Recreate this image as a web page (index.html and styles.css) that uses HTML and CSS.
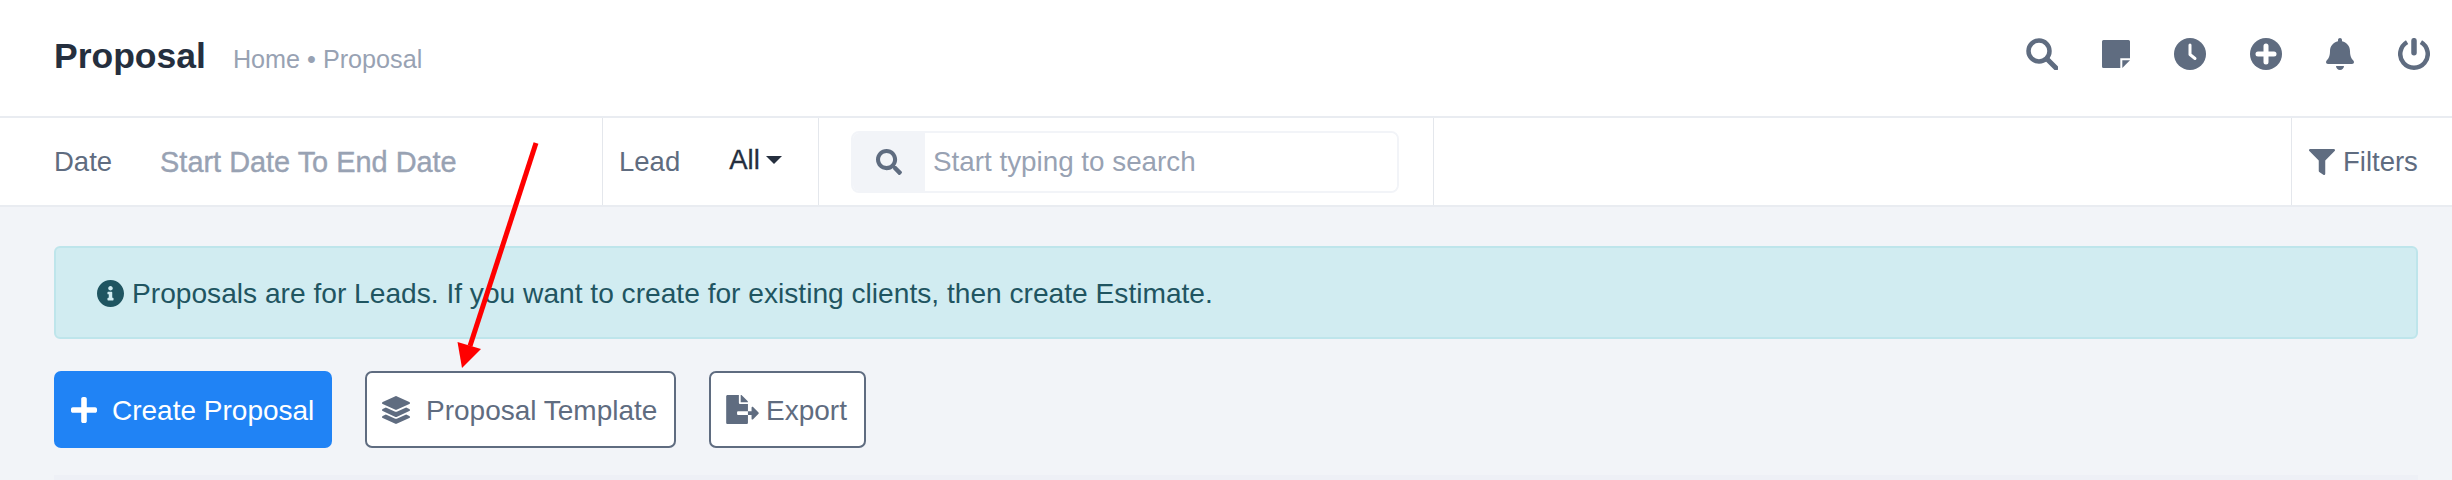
FILE: index.html
```html
<!DOCTYPE html>
<html lang="en">
<head>
  <meta charset="UTF-8" />
  <title>Proposal</title>
  <link rel="stylesheet" href="styles.css">
</head>
<body>
  <div class="header">
    <div class="title-wrap">
      <h1>Proposal</h1>
      <span class="crumbs">Home &bull; Proposal</span>
    </div>
    <div class="header-icons">
      <svg class="icon" viewBox="0 0 32 32"><circle cx="13" cy="13" r="10.500" fill="none" stroke="currentColor" stroke-width="4.500"/><path d="M21 21l9 9" stroke="currentColor" stroke-width="5" stroke-linecap="round"/></svg>
      <svg class="icon note" viewBox="0 0 28 28"><path d="M1.500 0h25A1.500 1.500 0 0 1 28 1.500V18.300H18.300V28H1.500A1.500 1.500 0 0 1 0 26.500v-25A1.500 1.500 0 0 1 1.500 0z"/><path d="M20.300 20.300H28L20.300 28z"/></svg>
      <svg class="icon" viewBox="0 0 32 32"><circle cx="16" cy="16" r="16"/><path d="M16 7v9.500l5 4" fill="none" stroke="#fff" stroke-width="3" stroke-linecap="round" stroke-linejoin="round"/></svg>
      <svg class="icon" viewBox="0 0 32 32"><circle cx="16" cy="16" r="16"/><path d="M16 8v16M8 16h16" stroke="#fff" stroke-width="5" stroke-linecap="round"/></svg>
      <svg class="icon bell" viewBox="0 0 448 512"><path d="M224 512c35.32 0 63.97-28.65 63.97-64H160.03c0 35.35 28.65 64 63.97 64zm215.39-149.71c-19.32-20.76-55.47-51.99-55.47-154.29 0-77.7-54.48-139.9-127.94-155.16V32c0-17.67-14.32-32-31.98-32s-31.98 14.33-31.98 32v20.84C118.56 68.1 64.08 130.3 64.08 208c0 102.3-36.15 133.53-55.47 154.29-6 6.45-8.66 14.16-8.61 21.71.11 16.4 12.98 32 32.1 32h383.8c19.12 0 32-15.6 32.1-32 .05-7.55-2.61-15.27-8.61-21.71z"/></svg>
      <svg class="icon" viewBox="0 0 32 32"><path d="M9.100 4.100a13.750 13.750 0 1 0 13.800 0" fill="none" stroke="currentColor" stroke-width="4.500"/><path d="M16 2.700v12" stroke="currentColor" stroke-width="5.500" stroke-linecap="round"/></svg>
    </div>
  </div>

  <div class="toolbar">
    <div class="tool tool-date">
      <span class="tool-label">Date</span>
      <span class="date-range">Start Date To End Date</span>
    </div>
    <div class="tool tool-lead">
      <span class="tool-label">Lead</span>
      <span class="lead-value">All</span>
      <span class="caret"></span>
    </div>
    <div class="tool tool-search">
      <div class="search-group">
        <span class="search-addon">
          <svg class="search-icon" viewBox="0 0 512 512"><path d="M505 442.7L405.3 343c-4.5-4.5-10.6-7-17-7H372c27.6-35.3 44-79.7 44-128C416 93.1 322.900 0 208 0S0 93.1 0 208s93.1 208 208 208c48.3 0 92.7-16.4 128-44v16.3c0 6.4 2.5 12.5 7 17l99.7 99.7c9.4 9.4 24.6 9.4 33.9 0l28.3-28.3c9.4-9.4 9.4-24.6.1-34zM208 336c-70.7 0-128-57.2-128-128 0-70.7 57.2-128 128-128 70.7 0 128 57.2 128 128 0 70.7-57.2 128-128 128z"/></svg>
        </span>
        <input class="search-input" type="text" placeholder="Start typing to search" />
      </div>
    </div>
    <div class="tool-spacer"></div>
    <div class="tool tool-filters">
      <svg class="filter-icon" viewBox="0 0 512 512"><path d="M487.976 0H24.028C2.71 0-8.047 25.866 7.058 40.971L192 225.941V432c0 7.831 3.821 15.17 10.237 19.662l80 55.98C298.02 518.69 320 507.493 320 487.98V225.941l184.947-184.97C520.021 25.896 509.338 0 487.976 0z"/></svg>
      <span>Filters</span>
    </div>
  </div>

  <div class="content">
    <div class="alert">
      <svg class="alert-icon" viewBox="8 8 496 496"><path d="M256 8C119.043 8 8 119.083 8 256c0 136.997 111.043 248 248 248s248-111.003 248-248C504 119.083 392.957 8 256 8zm0 110c23.196 0 42 18.804 42 42s-18.804 42-42 42-42-18.804-42-42 18.804-42 42-42zm56 254c0 6.627-5.373 12-12 12h-88c-6.627 0-12-5.373-12-12v-24c0-6.627 5.373-12 12-12h12v-64h-12c-6.627 0-12-5.373-12-12v-24c0-6.627 5.373-12 12-12h64c6.627 0 12 5.373 12 12v100h12c6.627 0 12 5.373 12 12v24z"/></svg>
      <span>Proposals are for Leads. If you want to create for existing clients, then create Estimate.</span>
    </div>

    <div class="actions">
      <a class="btn btn-primary">
        <svg class="btn-icon" viewBox="0 0 448 512"><path d="M416 208H272V64c0-17.67-14.33-32-32-32h-32c-17.67 0-32 14.33-32 32v144H32c-17.67 0-32 14.33-32 32v32c0 17.67 14.33 32 32 32h144v144c0 17.67 14.33 32 32 32h32c17.67 0 32-14.33 32-32V304h144c17.67 0 32-14.33 32-32v-32c0-17.67-14.33-32-32-32z"/></svg>
        Create Proposal
      </a>
      <a class="btn btn-outline btn-template">
        <svg class="btn-icon" viewBox="0 0 512 512"><path d="M12.41 148.02l232.94 105.67c6.8 3.09 14.49 3.09 21.29 0l232.94-105.67c16.55-7.51 16.55-32.52 0-40.03L266.65 2.31a25.607 25.607 0 0 0-21.29 0L12.41 107.98c-16.55 7.51-16.55 32.53 0 40.04zm487.18 88.28l-58.09-26.33-161.64 73.27c-7.56 3.43-15.59 5.17-23.86 5.17s-16.29-1.74-23.86-5.17L70.51 209.97l-58.1 26.33c-16.55 7.5-16.55 32.5 0 40l232.94 105.59c6.8 3.08 14.49 3.08 21.29 0L499.59 276.3c16.55-7.5 16.55-32.5 0-40zm0 127.8l-57.87-26.23-161.86 73.37c-7.56 3.43-15.59 5.17-23.86 5.17s-16.29-1.74-23.86-5.17L70.29 337.87 12.41 364.1c-16.55 7.5-16.55 32.5 0 40l232.94 105.59c6.8 3.08 14.49 3.08 21.29 0L499.59 404.1c16.55-7.5 16.55-32.5 0-40z"/></svg>
        Proposal Template
      </a>
      <a class="btn btn-outline btn-export">
        <svg class="btn-icon export-icon" viewBox="0 0 576 512"><path d="M384 121.9c0-6.3-2.5-12.4-7-16.9L279.1 7c-4.5-4.5-10.6-7-17-7H256v128h128zM571 308l-95.7-96.4c-10.1-10.1-27.4-3-27.4 11.3V288h-64v64h64v65.2c0 14.3 17.3 21.4 27.4 11.3L571 332c6.6-6.6 6.600-17.4 0-24zm-379 28v-32c0-8.8 7.2-16 16-16h176V160H248c-13.2 0-24-10.8-24-24V0H24C10.7 0 0 10.7 0 24v464c0 13.3 10.7 24 24 24h336c13.3 0 24-10.7 24-24V352H208c-8.8 0-16-7.2-16-16z"/></svg>
        Export
      </a>
    </div>

    <div class="card"></div>
  </div>

  <!-- annotation drawn over the page -->
  <svg class="annotation" viewBox="0 0 2452 480">
    <path d="M536 143L470 346" fill="none" stroke="#ff0000" stroke-width="5"/>
    <path d="M457.500 342L481 349L462 368z" fill="#ff0000"/>
  </svg>
</body>
</html>
```

FILE: styles.css
```css
html, body {
  margin: 0;
  padding: 0;
  height: 480px;
  overflow: hidden;
}
body {
  font-family: "Liberation Sans", Arial, sans-serif;
  background-color: #f2f4f8;
  color: #5f6c80;
}
.header {
  background-color: white;
  height: 118px;
  box-sizing: border-box;
  padding: 0 22px 8px 54px;
  border-bottom: 2px solid #e9ecf1;
  display: flex;
  align-items: center;
  justify-content: space-between;
}
.title-wrap {
  margin-top: 4px;
  display: flex;
  align-items: baseline;
  gap: 27px;
}
.title-wrap h1 {
  margin: 0;
  font-size: 35.500px;
  color: #252f3e;
}
.crumbs {
  font-size: 25.200px;
  color: #98a2b3;
}
.header-icons {
  display: flex;
  align-items: center;
  gap: 44px;
}
.icon {
  width: 32px;
  height: 32px;
  fill: #5f6c80;
  color: #5f6c80;
  display: block;
}
.icon.note {
  width: 28px;
  height: 28px;
}
.icon.bell {
  width: 28px;
}
.toolbar {
  background-color: white;
  height: 89px;
  box-sizing: border-box;
  border-bottom: 2px solid #e9ecf1;
  display: flex;
  font-size: 27.500px;
}
.tool {
  padding-top: 1px;
  display: flex;
  align-items: center;
  border-right: 1px solid #e4e7ec;
  box-sizing: border-box;
}
.tool-date {
  width: 603px;
  padding-left: 54px;
}
.tool-label {
  color: #5f6c80;
}
.date-range {
  margin-left: 48px;
  color: #98a2b3;
  font-size: 28.900px;
  -webkit-text-stroke: 0.4px #98a2b3;
}
.tool-lead {
  width: 216px;
  padding-left: 16px;
}
.lead-value {
  margin-left: 49px;
  color: #252f3e;
  position: relative;
  top: -2px;
  -webkit-text-stroke: 0.3px #252f3e;
}
.caret {
  margin-left: 6px;
  margin-top: -4px;
  border-left: 8px solid transparent;
  border-right: 8px solid transparent;
  border-top: 8px solid #252f3e;
}
.tool-search {
  width: 615px;
  padding-left: 32px;
}
.search-group {
  width: 548px;
  height: 62px;
  box-sizing: border-box;
  border: 2px solid #f2f4f8;
  border-radius: 8px;
  display: flex;
  overflow: hidden;
}
.search-addon {
  width: 72px;
  background-color: #f2f4f8;
  display: flex;
  align-items: center;
  justify-content: center;
}
.search-icon {
  width: 26px;
  height: 26px;
  fill: #5f6c80;
}
.search-input {
  flex-grow: 1;
  border: none;
  outline: none;
  padding: 0 8px;
  font-family: inherit;
  font-size: 27.800px;
  color: #5f6c80;
}
.search-input::placeholder {
  color: #98a2b3;
  opacity: 1;
}
.tool-spacer {
  flex-grow: 1;
  border-right: 1px solid #e4e7ec;
}
.tool-filters {
  width: 160px;
  padding-left: 17px;
  border-right: none;
  gap: 8px;
}
.filter-icon {
  width: 26px;
  height: 26px;
  fill: #5f6c80;
}
.content {
  padding: 39px 34px 0 54px;
}
.alert {
  height: 93px;
  box-sizing: border-box;
  background-color: #d1ecf1;
  border: 2px solid #bee5eb;
  border-radius: 6px;
  padding-left: 41px;
  padding-top: 2px;
  display: flex;
  align-items: center;
  gap: 8px;
  font-size: 28.150px;
  color: #1f5561;
}
.alert-icon {
  width: 27px;
  height: 27px;
  fill: #1f5561;
}
.actions {
  margin-top: 32px;
  display: flex;
  gap: 33px;
}
.btn {
  height: 77px;
  box-sizing: border-box;
  padding-top: 2px;
  border-radius: 7px;
  display: flex;
  align-items: center;
  font-size: 28px;
  white-space: nowrap;
}
.btn-primary {
  width: 278px;
  padding-left: 17px;
  gap: 15px;
  background-color: #2083f5;
  color: white;
}
.btn-primary .btn-icon {
  width: 26px;
  height: 30px;
  fill: white;
}
.btn-outline {
  background-color: white;
  border: 2px solid #5f6c80;
  color: #5f6c80;
}
.btn-template {
  width: 311px;
  padding-left: 15px;
  gap: 16px;
}
.btn-export {
  width: 157px;
  padding-left: 15px;
  gap: 7px;
}
.btn-icon {
  margin-top: -2px;
  width: 28px;
  height: 28px;
  fill: #5f6c80;
}
.export-icon {
  width: 33px;
  height: 29px;
}
.card {
  margin-top: 27px;
  height: 5px;
  background-color: #eef0f6;
}
.annotation {
  position: absolute;
  left: 0;
  top: 0;
  width: 2452px;
  height: 480px;
  pointer-events: none;
}
```
